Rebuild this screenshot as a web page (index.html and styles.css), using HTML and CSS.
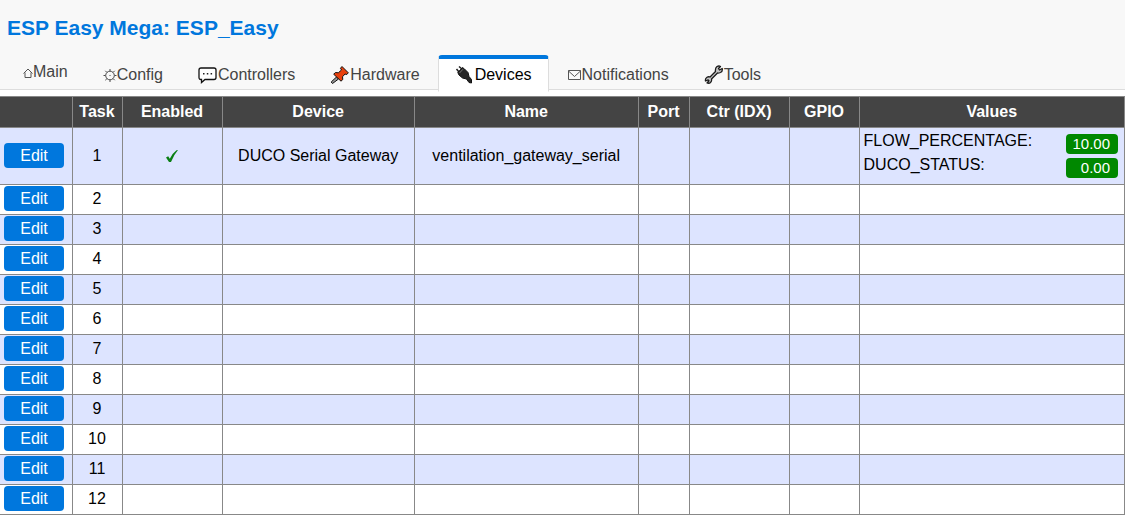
FILE: index.html
```html
<!DOCTYPE html>
<html lang="en">
<head>
<meta charset="utf-8">
<title>ESP_Easy</title>
<link rel="stylesheet" href="styles.css">
</head>
<body>
<header class="header">
  <h1 class="title">ESP Easy Mega: ESP_Easy</h1>
  <nav class="menu">
    <a class="tab tab-home" href="#main"><svg width="10" height="12" viewBox="0 0 10 12" fill="none" stroke="#555"><path d="M.5 6.500 5 2 9.500 6.500M2 5.500V10.500H8V5.500"/></svg>Main</a>
    <a class="tab" href="#config"><svg width="14" height="14" viewBox="0 0 14 14" fill="none" stroke="#4a4a4a"><circle cx="7" cy="7.500" r="4.300"/><path d="M6.500 7.500h1M7 1v2M7 12v2M.5 7.500h2M11.500 7.500h2M2.300 2.800 4 4.500M10 10.500l1.700 1.700M2.300 12.200 4 10.500M10 4.500l1.700-1.700"/></svg>Config</a>
    <a class="tab" href="#controllers"><svg width="20" height="18" viewBox="0 0 20 18"><path d="M3 2H16Q18 2 18 4V11.500Q18 13.500 16 13.500H7L3.500 16.500V13.500H3Q1 13.500 1 11.500V4Q1 2 3 2Z" fill="#fff" stroke="#111" stroke-width="1.300"/><path d="M5 7h1.500v1.500H5zM8.800 7h1.500v1.500H8.800zM12.600 7h1.500v1.500h-1.500z" fill="#222"/></svg>Controllers</a>
    <a class="tab" href="#hardware"><svg width="20" height="20" viewBox="0 0 20 20" stroke="#111" stroke-linejoin="round"><path d="M6.500 12 1.200 17 2.500 18.500 8.500 14Z" fill="#999"/><path d="M12 1.500 18.300 7.800 16.800 9.500 15 9 12.500 11.800 12.800 14.500 11 16.200 3.700 9.200 5.500 7.500 8.300 7.800 11.500 5 10.500 3.200Z" fill="#e8400d"/></svg>Hardware</a>
    <a class="tab tab-active" href="#devices" aria-current="page"><svg width="20" height="20" viewBox="0 0 20 20"><path d="M4 1.500 7 4M1.500 4 4 7" stroke="#222" stroke-width="1.600"/><path d="M2.800 7.500 7.500 2.500 9.500 4 13 7.500 14 11.500 16.500 14.500V18L14 17.500 11.500 14 7.500 13 4 10Z" fill="#252525" stroke="#111" stroke-linejoin="round"/><path d="M4.500 8 8 4.200" stroke="#888" stroke-width=".8"/></svg>Devices</a>
    <a class="tab" href="#notifications"><svg width="15" height="12" viewBox="0 0 15 12" fill="none" stroke="#555"><path d="M1.500 1.500H13.500V10.500H1.500ZM1.500 2 7.500 7.500 13.500 2"/></svg>Notifications</a>
    <a class="tab" href="#tools"><svg width="20" height="20" viewBox="0 0 20 20"><path d="M13 1.500Q15 .5 16.500 1.500L14.500 3.500 15.500 5 18.200 3.500Q18.800 6.500 16.500 7.500 14.500 8.200 13.500 8L7.500 14Q8 16 6.500 17.500 5.200 18.700 3 18L5 15.800 4.200 14.800 1.500 16Q1 13.500 3 12.200 4.500 11.400 6 12L11.500 6.500Q11 3 13 1.500Z" fill="#c4c4c4" stroke="#1a1a1a" stroke-width="1.300" stroke-linejoin="round"/></svg>Tools</a>
  </nav>
</header>
<main>
<table class="devices">
  <colgroup><col class="c-edit"><col class="c-small"><col class="c-wide"><col class="c-device"><col class="c-name"><col class="c-port"><col class="c-wide"><col class="c-gpio"><col></colgroup>
  <thead>
    <tr><th></th><th>Task</th><th>Enabled</th><th>Device</th><th>Name</th><th>Port</th><th>Ctr (IDX)</th><th>GPIO</th><th>Values</th></tr>
  </thead>
  <tbody>
    <tr><td><a class="edit" href="#1">Edit</a></td><td>1</td><td><svg width="14" height="14" viewBox="0 0 14 14" role="img" aria-label="Enabled"><path d="M1 8.500 3.200 7.200 4.800 9.800Q7.500 4 11.500 1.200L13 1Q9 5.500 6 13H4Z" fill="#0a7f14"/></svg></td><td>DUCO Serial Gateway</td><td>ventilation_gateway_serial</td><td></td><td></td><td></td>
      <td class="values">
        <div class="value"><span>FLOW_PERCENTAGE:</span><span class="badge">10.00</span></div>
        <div class="value"><span>DUCO_STATUS:</span><span class="badge">0.00</span></div>
      </td></tr>
    <tr><td><a class="edit" href="#2">Edit</a></td><td>2</td><td></td><td></td><td></td><td></td><td></td><td></td><td></td></tr>
    <tr><td><a class="edit" href="#3">Edit</a></td><td>3</td><td></td><td></td><td></td><td></td><td></td><td></td><td></td></tr>
    <tr><td><a class="edit" href="#4">Edit</a></td><td>4</td><td></td><td></td><td></td><td></td><td></td><td></td><td></td></tr>
    <tr><td><a class="edit" href="#5">Edit</a></td><td>5</td><td></td><td></td><td></td><td></td><td></td><td></td><td></td></tr>
    <tr><td><a class="edit" href="#6">Edit</a></td><td>6</td><td></td><td></td><td></td><td></td><td></td><td></td><td></td></tr>
    <tr><td><a class="edit" href="#7">Edit</a></td><td>7</td><td></td><td></td><td></td><td></td><td></td><td></td><td></td></tr>
    <tr><td><a class="edit" href="#8">Edit</a></td><td>8</td><td></td><td></td><td></td><td></td><td></td><td></td><td></td></tr>
    <tr><td><a class="edit" href="#9">Edit</a></td><td>9</td><td></td><td></td><td></td><td></td><td></td><td></td><td></td></tr>
    <tr><td><a class="edit" href="#10">Edit</a></td><td>10</td><td></td><td></td><td></td><td></td><td></td><td></td><td></td></tr>
    <tr><td><a class="edit" href="#11">Edit</a></td><td>11</td><td></td><td></td><td></td><td></td><td></td><td></td><td></td></tr>
    <tr><td><a class="edit" href="#12">Edit</a></td><td>12</td><td></td><td></td><td></td><td></td><td></td><td></td><td></td></tr>
  </tbody>
</table>
</main>
</body>
</html>
```
FILE: styles.css
```css
* { box-sizing: border-box; }
body {
  margin: 0;
  background: #fff;
  color: #000;
  font: 16px/18px "Liberation Sans", Arial, sans-serif;
}
.header {
  background: #f8f8f8;
  border-bottom: 1px solid #ddd;
  margin-bottom: 6px;
  padding-top: 16px;
}
.title {
  margin: 0 0 15px;
  padding-left: 7px;
  color: #07d;
  font-size: 21px;
  line-height: 24px;
}
.menu {
  display: flex;
  gap: 1px;
  padding-left: 6px;
  margin-bottom: -3px;
}
.tab {
  display: flex;
  align-items: center;
  height: 37px;
  padding: 0 16px;
  border: 1px solid transparent;
  border-top-width: 4px;
  border-radius: 4px 4px 0 0;
  color: #444;
  text-decoration: none;
}
.tab svg { flex: none; }
.tab-home { align-items: flex-start; padding-top: 4px; }
.tab-home svg { margin-top: 4px; }
.tab-active {
  background: #fff;
  border-color: #07d #ddd transparent;
  color: #000;
}
.devices {
  width: 100%;
  table-layout: fixed;
  border-collapse: collapse;
}
.c-edit { width: 72px; }
.c-small { width: 50px; }
.c-wide { width: 100px; }
.c-device { width: 17.1%; }
.c-name { width: 19.9%; }
.c-port { width: 51px; }
.c-gpio { width: 70px; }
.devices th, .devices td {
  padding: 0;
  border: 1px solid #888;
  text-align: center;
  vertical-align: middle;
}
.devices th:first-child, .devices td:first-child { border-left: 0; }
.devices th {
  height: 31px;
  background: #444;
  color: #fff;
}
.devices td { height: 30px; padding-bottom: 1px; }
.devices tbody tr:nth-child(odd) { background: #dde4ff; }
.devices td svg { display: block; margin: 0 auto; }
.edit {
  display: block;
  width: 60px;
  margin: 0 4px 1px;
  border-radius: 4px;
  background: #07d;
  color: #fff;
  line-height: 25px;
  text-decoration: none;
}
.devices .values { padding: 3px 6px 5px 4px; }
.value {
  display: flex;
  justify-content: space-between;
  align-items: flex-start;
  height: 24px;
  line-height: 20px;
}
.badge {
  min-width: 52px;
  margin-top: 3px;
  padding-right: 8px;
  border-radius: 4px;
  background: #080;
  color: #fff;
  font-size: 15px;
  text-align: right;
}
```
